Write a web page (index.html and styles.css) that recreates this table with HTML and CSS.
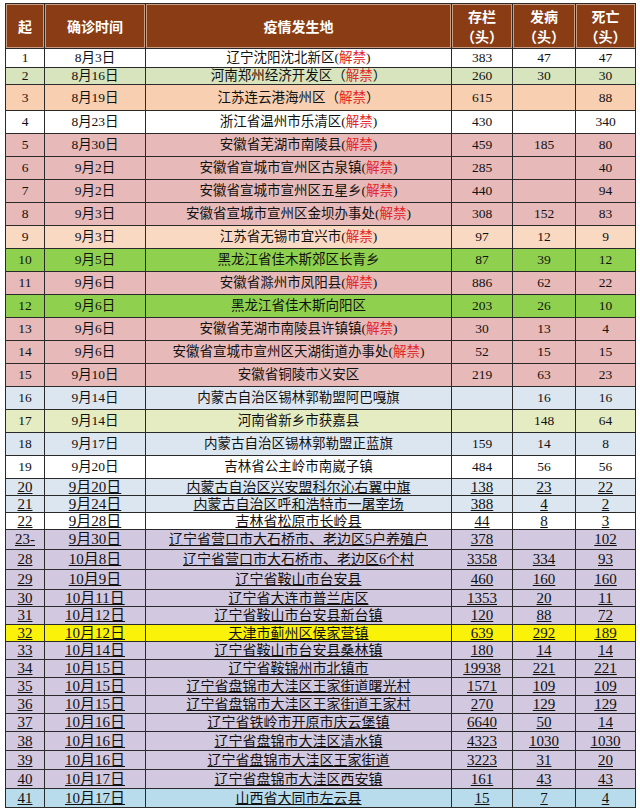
FILE: index.html
```html
<!DOCTYPE html>
<html lang="zh-CN">
<head>
<meta charset="utf-8">
<title>非洲猪瘟疫情统计</title>
<link rel="stylesheet" href="styles.css">
</head>
<body>
<table class="tbl">
  <colgroup>
    <col class="c-no"><col class="c-date"><col class="c-loc"><col class="c-n1"><col class="c-n2"><col class="c-n3">
  </colgroup>
  <thead>
    <tr class="head">
      <th>起</th><th>确诊时间</th><th>疫情发生地</th><th><span class="hl">存栏</span><span class="hl">（头）</span></th><th><span class="hl">发病</span><span class="hl">（头）</span></th><th><span class="hl">死亡</span><span class="hl">（头）</span></th>
    </tr>
  </thead>
  <tbody>
    <tr class="up white h19"><td>1</td><td>8月3日</td><td>辽宁沈阳沈北新区(<span class="red">解禁</span>)</td><td>383</td><td>47</td><td>47</td></tr>
    <tr class="up lgreen h17"><td>2</td><td>8月16日</td><td>河南郑州经济开发区（<span class="red">解禁</span>）</td><td>260</td><td>30</td><td>30</td></tr>
    <tr class="up peach h26"><td>3</td><td>8月19日</td><td>江苏连云港海州区（<span class="red">解禁</span>）</td><td>615</td><td></td><td>88</td></tr>
    <tr class="up white h23"><td>4</td><td>8月23日</td><td>浙江省温州市乐清区(<span class="red">解禁</span>)</td><td>430</td><td></td><td>340</td></tr>
    <tr class="up pink h23"><td>5</td><td>8月30日</td><td>安徽省芜湖市南陵县(<span class="red">解禁</span>)</td><td>459</td><td>185</td><td>80</td></tr>
    <tr class="up pink h23"><td>6</td><td>9月2日</td><td>安徽省宣城市宣州区古泉镇(<span class="red">解禁</span>)</td><td>285</td><td></td><td>40</td></tr>
    <tr class="up pink h23"><td>7</td><td>9月2日</td><td>安徽省宣城市宣州区五星乡(<span class="red">解禁</span>)</td><td>440</td><td></td><td>94</td></tr>
    <tr class="up pink h23"><td>8</td><td>9月3日</td><td>安徽省宣城市宣州区金坝办事处(<span class="red">解禁</span>)</td><td>308</td><td>152</td><td>83</td></tr>
    <tr class="up peach2 h23"><td>9</td><td>9月3日</td><td>江苏省无锡市宜兴市(<span class="red">解禁</span>)</td><td>97</td><td>12</td><td>9</td></tr>
    <tr class="up green h23"><td>10</td><td>9月5日</td><td>黑龙江省佳木斯郊区长青乡</td><td>87</td><td>39</td><td>12</td></tr>
    <tr class="up pink h23"><td>11</td><td>9月6日</td><td>安徽省滁州市凤阳县(<span class="red">解禁</span>)</td><td>886</td><td>62</td><td>22</td></tr>
    <tr class="up green h23"><td>12</td><td>9月6日</td><td>黑龙江省佳木斯向阳区</td><td>203</td><td>26</td><td>10</td></tr>
    <tr class="up pink h23"><td>13</td><td>9月6日</td><td>安徽省芜湖市南陵县许镇镇(<span class="red">解禁</span>)</td><td>30</td><td>13</td><td>4</td></tr>
    <tr class="up pink h23"><td>14</td><td>9月6日</td><td>安徽省宣城市宣州区天湖街道办事处(<span class="red">解禁</span>)</td><td>52</td><td>15</td><td>15</td></tr>
    <tr class="up pink h23"><td>15</td><td>9月10日</td><td>安徽省铜陵市义安区</td><td>219</td><td>63</td><td>23</td></tr>
    <tr class="up lblue h23"><td>16</td><td>9月14日</td><td>内蒙古自治区锡林郭勒盟阿巴嘎旗</td><td></td><td>16</td><td>16</td></tr>
    <tr class="up lyg h23"><td>17</td><td>9月14日</td><td>河南省新乡市获嘉县</td><td></td><td>148</td><td>64</td></tr>
    <tr class="up lblue h23"><td>18</td><td>9月17日</td><td>内蒙古自治区锡林郭勒盟正蓝旗</td><td>159</td><td>14</td><td>8</td></tr>
    <tr class="up white h23"><td>19</td><td>9月20日</td><td>吉林省公主岭市南崴子镇</td><td>484</td><td>56</td><td>56</td></tr>
    <tr class="low lblue h17"><td>20</td><td>9月20日</td><td>内蒙古自治区兴安盟科尔沁右翼中旗</td><td>138</td><td>23</td><td>22</td></tr>
    <tr class="low lblue h17"><td>21</td><td>9月24日</td><td>内蒙古自治区呼和浩特市一屠宰场</td><td>388</td><td>4</td><td>2</td></tr>
    <tr class="low white h17"><td>22</td><td>9月28日</td><td>吉林省松原市长岭县</td><td>44</td><td>8</td><td>3</td></tr>
    <tr class="low lav h20"><td>23-</td><td>9月30日</td><td>辽宁省营口市大石桥市、老边区5户养殖户</td><td>378</td><td></td><td>102</td></tr>
    <tr class="low lav h20"><td>28</td><td>10月8日</td><td>辽宁省营口市大石桥市、老边区6个村</td><td>3358</td><td>334</td><td>93</td></tr>
    <tr class="low lav h20"><td>29</td><td>10月9日</td><td>辽宁省鞍山市台安县</td><td>460</td><td>160</td><td>160</td></tr>
    <tr class="low lav h17"><td>30</td><td>10月11日</td><td>辽宁省大连市普兰店区</td><td>1353</td><td>20</td><td>11</td></tr>
    <tr class="low lav h18"><td>31</td><td>10月12日</td><td>辽宁省鞍山市台安县新台镇</td><td>120</td><td>88</td><td>72</td></tr>
    <tr class="low yellow h17"><td>32</td><td>10月12日</td><td>天津市蓟州区侯家营镇</td><td>639</td><td>292</td><td>189</td></tr>
    <tr class="low lav h18"><td>33</td><td>10月14日</td><td>辽宁省鞍山市台安县桑林镇</td><td>180</td><td>14</td><td>14</td></tr>
    <tr class="low lav h18"><td>34</td><td>10月15日</td><td>辽宁省鞍锦州市北镇市</td><td>19938</td><td>221</td><td>221</td></tr>
    <tr class="low lav h18"><td>35</td><td>10月15日</td><td>辽宁省盘锦市大洼区王家街道曙光村</td><td>1571</td><td>109</td><td>109</td></tr>
    <tr class="low lav h18"><td>36</td><td>10月15日</td><td>辽宁省盘锦市大洼区王家街道王家村</td><td>270</td><td>129</td><td>129</td></tr>
    <tr class="low lav h18"><td>37</td><td>10月16日</td><td>辽宁省铁岭市开原市庆云堡镇</td><td>6640</td><td>50</td><td>14</td></tr>
    <tr class="low lav h19"><td>38</td><td>10月16日</td><td>辽宁省盘锦市大洼区清水镇</td><td>4323</td><td>1030</td><td>1030</td></tr>
    <tr class="low lav h19"><td>39</td><td>10月16日</td><td>辽宁省盘锦市大洼区王家街道</td><td>3223</td><td>31</td><td>20</td></tr>
    <tr class="low lav h19"><td>40</td><td>10月17日</td><td>辽宁省盘锦市大洼区西安镇</td><td>161</td><td>43</td><td>43</td></tr>
    <tr class="low aqua h19 last"><td>41</td><td>10月17日</td><td>山西省大同市左云县</td><td>15</td><td>7</td><td>4</td></tr>
  </tbody>
</table>
</body>
</html>
```

FILE: styles.css
```css
html, body {
  margin: 0;
  padding: 0;
  background: #ffffff;
}

body {
  padding: 3px 0 0 5px;
  font-family: "Liberation Serif", "Noto Sans CJK SC", serif;
  color: #111;
}

.tbl {
  border-collapse: collapse;
  table-layout: fixed;
  width: 630px;
}

.c-no { width: 39px; }
.c-date { width: 101px; }
.c-loc { width: 306px; }
.c-n1 { width: 61px; }
.c-n2 { width: 63px; }
.c-n3 { width: 60px; }

.tbl th,
.tbl td {
  border: 1px solid #2a2a2a;
  padding: 0;
  text-align: center;
  vertical-align: middle;
  white-space: nowrap;
  overflow: hidden;
}

.head th {
  height: 44px;
  background: #8a3c14;
  color: #fff;
  font-family: "Noto Sans CJK SC", sans-serif;
  font-weight: 700;
  font-size: 14px;
  line-height: 20px;
  box-shadow: inset 0 0 0 1px rgba(255, 235, 220, 0.55);
}

.hl {
  display: block;
  height: 20px;
  line-height: 20px;
}

.up td {
  font-size: 13.5px;
  line-height: 14px;
}

.low td {
  font-size: 15px;
  line-height: 15px;
  text-decoration: underline;
  text-decoration-thickness: 1px;
  text-underline-offset: 1px;
}

.up td:nth-child(3) { font-size: 13.5px; }
.low td:nth-child(3) { font-size: 14px; }

.red { color: #e4262b; }

.h17 { height: 17px; }
.h18 { height: 18px; }
.h19 { height: 19px; }
.h20 { height: 20px; }
.h23 { height: 23px; }
.h26 { height: 26px; }

.white { background: #ffffff; }
.lgreen { background: #d7e4bd; }
.peach { background: #f8cfb0; }
.peach2 { background: #fad9c3; }
.pink { background: #e7b9b8; }
.green { background: #8fd14f; }
.lblue { background: #dce6f0; }
.lyg { background: #e5ecc2; }
.lav { background: #d2c8e0; }
.yellow { background: #fbf20a; }
.aqua { background: #b9dced; }
```
